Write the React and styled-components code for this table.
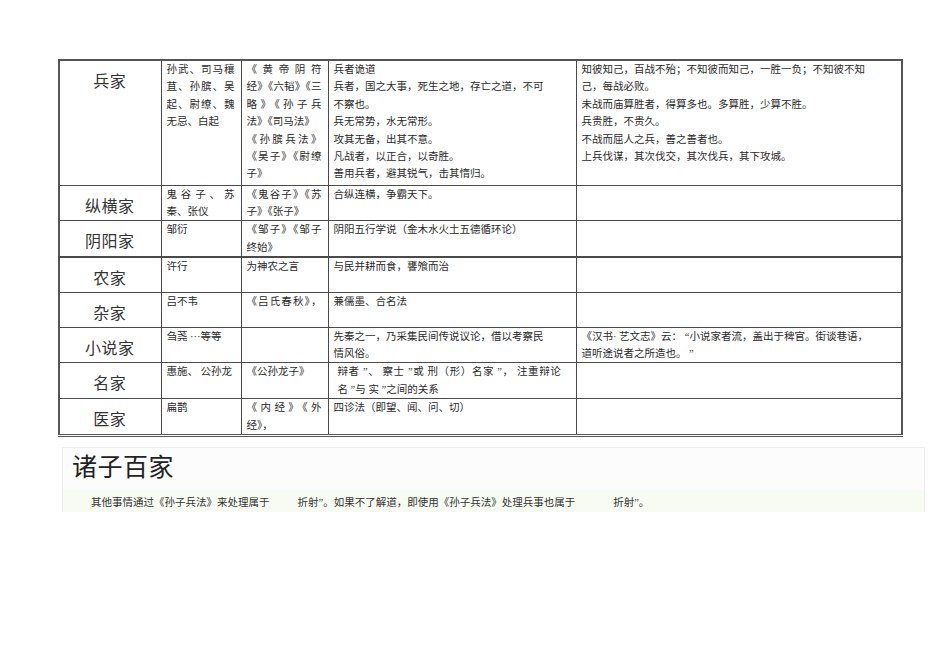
import styled, { createGlobalStyle } from "styled-components";

const GlobalStyle = createGlobalStyle`
  body {
    margin: 0;
    background: #ffffff;
    font-family: "Liberation Serif", "Noto Sans CJK SC", serif;
    color: #222222;
  }
`;

const Page = styled.div`
  width: 950px;
  height: 672px;
  padding: 59px 0 0 58px;
  box-sizing: border-box;
  display: flex;
  flex-direction: column;
  align-items: flex-start;
`;

const Table = styled.table`
  width: 845px;
  table-layout: fixed;
  border-collapse: collapse;
  border: 2px solid #555555;
  border-bottom: 3px double #555555;
`;

const Col = styled.col`
  width: ${(p) => (p.$w ? `${p.$w}px` : "auto")};
`;

const Row = styled.tr`
  height: ${(p) => p.$h}px;
`;

const Cell = styled.td`
  border: 1px solid #4a4a4a;
  border-top-width: ${(p) => (p.$thick ? 2 : 1)}px;
  vertical-align: top;
  padding: 0 6px 0 5px;
  font-size: 10.5px;
  line-height: 17.4px;
  color: #2a2a2a;
  overflow: hidden;
`;

const NameCell = styled(Cell)`
  font-size: 16px;
  line-height: 20px;
  padding-top: 11px;
  text-align: center;
  color: #333333;
  letter-spacing: 0.5px;
`;

const Line = styled.div`
  white-space: nowrap;
  text-align: ${(p) => (p.$just ? "justify" : "left")};
  text-align-last: ${(p) => (p.$just ? "justify" : "left")};
  padding-left: ${(p) => p.$indent || 0}px;
  letter-spacing: ${(p) => p.$spread || 0}px;
`;

const Panel = styled.div`
  margin: 10px 0 0 4px;
  width: 861px;
  border: 1px solid #ececec;
  border-bottom: none;
  display: flex;
  flex-direction: column;
`;

const Heading = styled.div`
  background: #fcfcfc;
  padding: 5px 0 8px 9px;
  font-size: 25px;
  line-height: 29px;
  color: #222222;
  letter-spacing: 0.5px;
`;

const Note = styled.div`
  background: #f7fbf2;
  padding: 6px 0 3px 28px;
  font-size: 10.5px;
  line-height: 13px;
  color: #333333;
  white-space: nowrap;
  display: flex;
  align-items: center;
`;

const Gap = styled.span`
  display: inline-block;
  width: ${(p) => p.$w}px;
`;

// second entry of a line pair = justified line (spread across the cell)
const rows = [
  {
    name: "兵家",
    h: 125,
    people: [
      ["孙武、司马穰", 1],
      ["苴、孙膑、吴", 1],
      ["起、尉缭、魏", 1],
      ["无忌、白起"],
    ],
    books: [
      ["《黄帝阴符", 1],
      ["经》《六韬》《三", 1],
      ["略》《孙子兵", 1],
      ["法》《司马法》"],
      ["《孙膑兵法》", 1],
      ["《吴子》《尉缭", 1],
      ["子》"],
    ],
    idea: [
      "兵者诡道",
      "兵者，国之大事，死生之地，存亡之道，不可",
      "不察也。",
      "兵无常势，水无常形。",
      "攻其无备，出其不意。",
      "凡战者，以正合，以奇胜。",
      "善用兵者，避其锐气，击其惰归。",
    ],
    quote: [
      "知彼知己，百战不殆；不知彼而知己，一胜一负；不知彼不知",
      "己，每战必败。",
      "未战而庙算胜者，得算多也。多算胜，少算不胜。",
      "兵贵胜，不贵久。",
      "不战而屈人之兵，善之善者也。",
      "上兵伐谋，其次伐交，其次伐兵，其下攻城。",
    ],
  },
  {
    name: "纵横家",
    people: [["鬼谷子、苏", 1], ["秦、张仪"]],
    books: [["《鬼谷子》《苏", 1], ["子》《张子》"]],
    idea: ["合纵连横，争霸天下。"],
    quote: [],
  },
  {
    name: "阴阳家",
    people: [["邹衍"]],
    books: [["《邹子》《邹子", 1], ["终始》"]],
    idea: ["阴阳五行学说（金木水火土五德循环论）"],
    quote: [],
  },
  {
    name: "农家",
    thick: true,
    people: [["许行"]],
    books: [["为神农之言"]],
    idea: ["与民并耕而食，饔飧而治"],
    quote: [],
  },
  {
    name: "杂家",
    people: [["吕不韦"]],
    books: [["《吕氏春秋》，", 1]],
    idea: ["兼儒墨、合名法"],
    quote: [],
  },
  {
    name: "小说家",
    people: [["刍荛 ···等等"]],
    books: [],
    idea: ["先秦之一，乃采集民间传说议论，借以考察民", "情风俗。"],
    quote: ["《汉书· 艺文志》云：  “小说家者流，盖出于稗官。街谈巷语，", "道听途说者之所造也。  ”"],
  },
  {
    name: "名家",
    people: [["惠施、 公孙龙"]],
    books: [["《公孙龙子》"]],
    idea: ["辩者 ”、 察士 ”或 刑（形）名家  ”， 注重辩论", "名 ”与  实 ”之间的关系"],
    ideaIndent: 4,
    quote: [],
  },
  {
    name: "医家",
    people: [["扁鹊"]],
    books: [["《内经》《外", 1], ["经》，"]],
    idea: ["四诊法（即望、闻、问、切）"],
    quote: [],
  },
];

function App() {
  return (
    <>
      <GlobalStyle />
      <Page>
        <Table>
          <colgroup>
            <Col $w={102} />
            <Col $w={80} />
            <Col $w={87} />
            <Col $w={248} />
            <Col />
          </colgroup>
          <tbody>
            {rows.map((row) => (
              <Row key={row.name} $h={row.h || 35}>
                <NameCell $thick={row.thick}>{row.name}</NameCell>
                <Cell $thick={row.thick}>
                  {row.people.map(([text, just], i) => (
                    <Line key={i} $just={just}>
                      {text}
                    </Line>
                  ))}
                </Cell>
                <Cell $thick={row.thick}>
                  {row.books.map(([text, just], i) => (
                    <Line key={i} $just={just}>
                      {text}
                    </Line>
                  ))}
                </Cell>
                <Cell $thick={row.thick}>
                  {row.idea.map((text, i) => (
                    <Line key={i} $indent={row.ideaIndent} $spread={row.ideaIndent && i === 0 ? 0.6 : 0}>
                      {text}
                    </Line>
                  ))}
                </Cell>
                <Cell $thick={row.thick}>
                  {row.quote.map((text, i) => (
                    <Line key={i}>{text}</Line>
                  ))}
                </Cell>
              </Row>
            ))}
          </tbody>
        </Table>
        <Panel>
          <Heading>诸子百家</Heading>
          <Note>
            其他事情通过《孙子兵法》来处理属于
            <Gap $w={28} />
            折射”。如果不了解道，即使用《孙子兵法》处理兵事也属于
            <Gap $w={38} />
            折射”。
          </Note>
        </Panel>
      </Page>
    </>
  );
}

export default App;
